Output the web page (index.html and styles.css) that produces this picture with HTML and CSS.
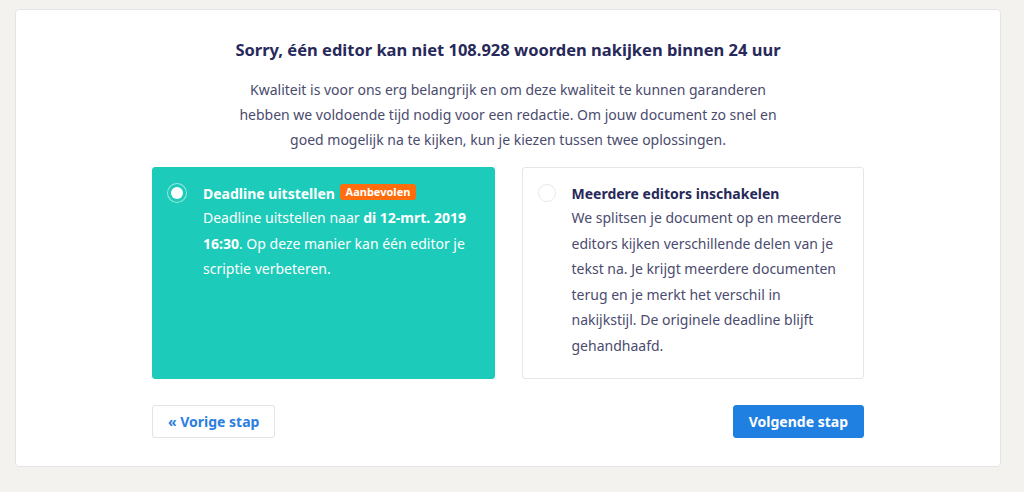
FILE: index.html
```html
<!DOCTYPE html>
<html lang="nl">
<head>
<meta charset="utf-8">
<link rel="stylesheet" href="styles.css">
</head>
<body>
<div class="panel">
  <h1 class="title">Sorry, één editor kan niet 108.928 woorden nakijken binnen 24 uur</h1>
  <p class="intro">Kwaliteit is voor ons erg belangrijk en om deze kwaliteit te kunnen garanderen hebben we voldoende tijd nodig voor een redactie. Om jouw document zo snel en goed mogelijk na te kijken, kun je kiezen tussen twee oplossingen.</p>
  <div class="options">
    <div class="option option-active">
      <span class="radio radio-on"></span>
      <div class="option-body">
        <div class="option-title">Deadline uitstellen <span class="badge">Aanbevolen</span></div>
        <div class="option-text">Deadline uitstellen naar <b>di 12-mrt. 2019 16:30</b>. Op deze manier kan één editor je scriptie verbeteren.</div>
      </div>
    </div>
    <div class="option">
      <span class="radio"></span>
      <div class="option-body">
        <div class="option-title">Meerdere editors inschakelen</div>
        <div class="option-text">We splitsen je document op en meerdere editors kijken verschillende delen van je tekst na. Je krijgt meerdere documenten terug en je merkt het verschil in nakijkstijl. De originele deadline blijft gehandhaafd.</div>
      </div>
    </div>
  </div>
  <div class="actions">
    <button class="btn btn-prev">« Vorige stap</button>
    <button class="btn btn-next">Volgende stap</button>
  </div>
</div>
</body>
</html>
```
FILE: styles.css
```css
html, body { margin: 0; padding: 0; }
body {
  background: #f3f2ef;
  font-family: "Noto Sans", "Open Sans", sans-serif;
  color: #2b2e5a;
  padding: 9px 23px 0 15px;
}
.panel {
  background: #fff;
  border: 1px solid #e4e4e8;
  border-radius: 4px;
  height: 458px;
  box-sizing: border-box;
  padding: 28px 136px 0 136px;
}
.title {
  margin: 0;
  text-align: center;
  font-size: 16.5px;
  font-weight: 700;
  line-height: 24px;
  color: #27295a;
}
.intro {
  margin: 15px auto 0;
  width: 560px;
  text-align: center;
  font-size: 14px;
  line-height: 25px;
  color: #4a4b6e;
}
.options {
  display: flex;
  gap: 27px;
  margin-top: 15px;
}
.option {
  flex: 1;
  height: 212px;
  box-sizing: border-box;
  border: 1px solid #e6e6ea;
  border-radius: 3px;
  display: flex;
  padding: 15px 16px 0 15px;
  gap: 16px;
  color: #4a4b6e;
}
.option-active {
  background: #1ccbb9;
  border-color: #1ccbb9;
  color: #fff;
}
.radio {
  flex: none;
  width: 18px;
  height: 18px;
  border-radius: 50%;
  border: 1px solid #e8e8ec;
  background: #fff;
  margin-top: 1px;
  box-sizing: border-box;
}
.radio-on {
  border: 1px solid rgba(255,255,255,0.55);
  background: #1ccbb9;
  position: relative;
  width: 20px;
  height: 20px;
  margin-top: 0;
  margin-left: -1px;
}
.radio-on::after {
  content: "";
  position: absolute;
  left: 3px;
  top: 3px;
  width: 12px;
  height: 12px;
  border-radius: 50%;
  background: #fff;
}
.option-body { flex: 1; }
.option-title {
  font-size: 14px;
  font-weight: 700;
  line-height: 22px;
  color: #27295a;
}
.option-active .option-title { color: #fff; }
.badge {
  display: inline-block;
  vertical-align: 3px;
  margin-left: 1px;
  background: #ff6d0c;
  color: #fff;
  font-size: 11px;
  font-weight: 700;
  line-height: 16px;
  padding: 0 6px;
  border-radius: 3px;
}
.option-text {
  font-size: 14px;
  line-height: 25.5px;
}
.actions {
  display: flex;
  justify-content: space-between;
  margin-top: 26px;
}
.btn {
  height: 33px;
  border-radius: 3px;
  font-family: "Noto Sans", sans-serif;
  font-size: 14px;
  font-weight: 700;
  padding: 0 15px;
  cursor: pointer;
}
.btn-prev {
  background: #fff;
  border: 1px solid #e3e3e8;
  color: #2b7fe0;
}
.btn-next {
  background: #1f80e2;
  border: 1px solid #1f80e2;
  color: #fff;
}
```
